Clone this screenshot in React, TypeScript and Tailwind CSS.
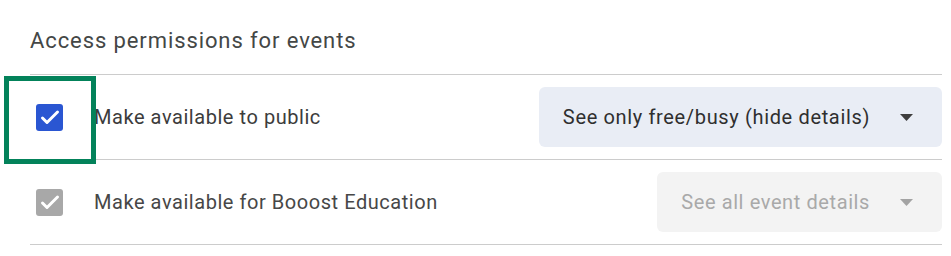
import React from 'react';

const Check: React.FC<{ className: string }> = ({ className }) => (
  <div className={`flex h-[27px] w-[27px] items-center justify-center rounded-[3px] ${className}`}>
    <svg viewBox="0 0 24 24" className="h-[24px] w-[24px]" fill="none">
      <path d="M4.5 13l4.5 4.5L19.5 7" stroke="white" strokeWidth="3" strokeLinecap="round" strokeLinejoin="round" />
    </svg>
  </div>
);

const Caret: React.FC<{ color: string }> = ({ color }) => (
  <svg viewBox="0 0 13 7" className="h-[7px] w-[13px]">
    <path d="M0 0h13L6.5 7z" fill={color} />
  </svg>
);

const App: React.FC = () => {
  return (
    <div className="relative h-[256px] w-[951px] bg-white font-['Roboto',sans-serif]">
      <div className="ml-[30px] w-[912px]">
        <div className="border-b border-[#cccccc] pb-[17px] pt-[24px] text-[22px] leading-[33px] tracking-[0.9px] text-[#444746]">
          Access permissions for events
        </div>

        {/* public row */}
        <div className="flex h-[85px] items-center border-b border-[#cccccc] pl-[6px]">
          <Check className="bg-[#2a56d2]" />
          <span className="ml-[31px] text-[20px] tracking-[0.55px] text-[#3c3c3c]">Make available to public</span>
          <div className="ml-auto flex h-[60px] items-center rounded-[6px] bg-[#e9edf5] pl-[24px] pr-[29px]">
            <span className="text-[20px] tracking-[0.65px] text-[#2f2f2f]">See only free/busy (hide details)</span>
            <span className="ml-[30px]">
              <Caret color="#3e3e3e" />
            </span>
          </div>
        </div>

        {/* org row */}
        <div className="flex h-[85px] items-center border-b border-[#cccccc] pl-[6px]">
          <Check className="bg-[#a8a8a8]" />
          <span className="ml-[31px] text-[20px] tracking-[0.55px] text-[#474747]">Make available for Booost Education</span>
          <div className="ml-auto flex h-[60px] items-center rounded-[6px] bg-[#f3f3f3] pl-[24px] pr-[29px]">
            <span className="text-[20px] tracking-[0.6px] text-[#a9a9a9]">See all event details</span>
            <span className="ml-[30px]">
              <Caret color="#a3a3a3" />
            </span>
          </div>
        </div>
      </div>

      {/* highlight box */}
      <div className="absolute left-[4px] top-[76px] h-[88px] w-[92px] border-[5px] border-[#03825a]" />
    </div>
  );
};

export default App;
